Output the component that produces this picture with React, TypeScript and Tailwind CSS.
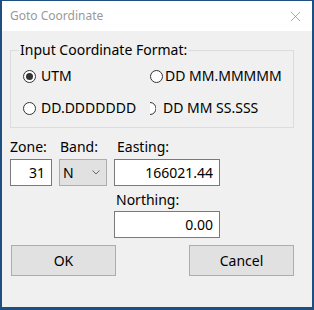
import { X } from "lucide-react";

const Radio = ({ checked = false }: { checked?: boolean }) => (
  <span className="flex h-[13px] w-[13px] shrink-0 items-center justify-center rounded-full border border-[#333] bg-white">
    {checked && <span className="h-[7px] w-[7px] rounded-full bg-[#333]" />}
  </span>
);

const GotoCoordinate = () => {
  return (
    <div
      className="flex h-[310px] w-[314px] flex-col border-x-2 border-t border-b-[3px] border-[#1f4e80] bg-[#f0f0f0] text-[14px] leading-5 text-black"
      style={{ fontFamily: '"Noto Sans", "Open Sans", sans-serif' }}
    >
      {/* Title bar */}
      <div className="flex h-[30px] shrink-0 items-center justify-between bg-white pl-[8px] pr-[8px]">
        <span className="text-[12px] text-[#999]">Goto Coordinate</span>
        <X size={17} strokeWidth={1} className="text-[#888]" />
      </div>

      <div className="flex flex-col px-[8px]">
        {/* Format group */}
        <fieldset className="mt-[9px] w-[284px] border border-[#dcdcdc] pb-[9px] pl-[12px]">
          <legend className="-ml-[4px] px-[1px]">Input Coordinate Format:</legend>
          <div className="grid grid-cols-[127px_1fr] gap-y-[12px] pt-[6px]">
            <label className="flex items-center gap-[5px]">
              <Radio checked />
              UTM
            </label>
            <label className="flex items-center gap-[2px]">
              <Radio />
              DD MM.MMMMM
            </label>
            <label className="flex items-center gap-[5px]">
              <Radio />
              DD.DDDDDDD
            </label>
            <label className="flex items-center gap-[7px]">
              <svg width="6" height="13" viewBox="0 0 6 13" className="shrink-0">
                <path d="M0 0.5 A6 6 0 0 1 0 12.5" fill="white" stroke="#333" />
              </svg>
              DD MM SS.SSS
            </label>
          </div>
        </fieldset>

        {/* Fields */}
        <div className="mt-[9px] grid grid-cols-[42px_48px_106px] gap-x-[7px]">
          <span>Zone:</span>
          <span className="pl-[1px]">Band:</span>
          <span className="pl-[3px]">Easting:</span>

          <div className="mt-[2px] flex h-[27px] items-center justify-end border border-[#7a7a7a] bg-white pr-[6px]">
            31
          </div>
          <div className="mt-[2px] flex h-[27px] items-center justify-between border border-[#adadad] bg-[#e1e1e1] pl-[3px] pr-[6px]">
            N
            <svg width="8" height="5" viewBox="0 0 8 5">
              <path d="M0.5 0.5 L4 4 L7.5 0.5" fill="none" stroke="#666" />
            </svg>
          </div>
          <div className="mt-[2px] flex h-[27px] items-center justify-end border border-[#7a7a7a] bg-white pr-[6px]">
            166021.44
          </div>

          <span className="col-start-3 mt-[4px] pl-[2px]">Northing:</span>
          <div className="col-start-3 mt-[1px] flex h-[27px] items-center justify-end border border-[#7a7a7a] bg-white pr-[6px]">
            0.00
          </div>
        </div>

        {/* Buttons */}
        <div className="mt-[7px] flex w-[284px] justify-between pl-[1px]">
          <button className="h-[31px] w-[105px] border border-[#adadad] bg-[#e1e1e1]">OK</button>
          <button className="h-[31px] w-[105px] border border-[#adadad] bg-[#e1e1e1]">Cancel</button>
        </div>
      </div>
    </div>
  );
};

export default function App() {
  return <GotoCoordinate />;
}
